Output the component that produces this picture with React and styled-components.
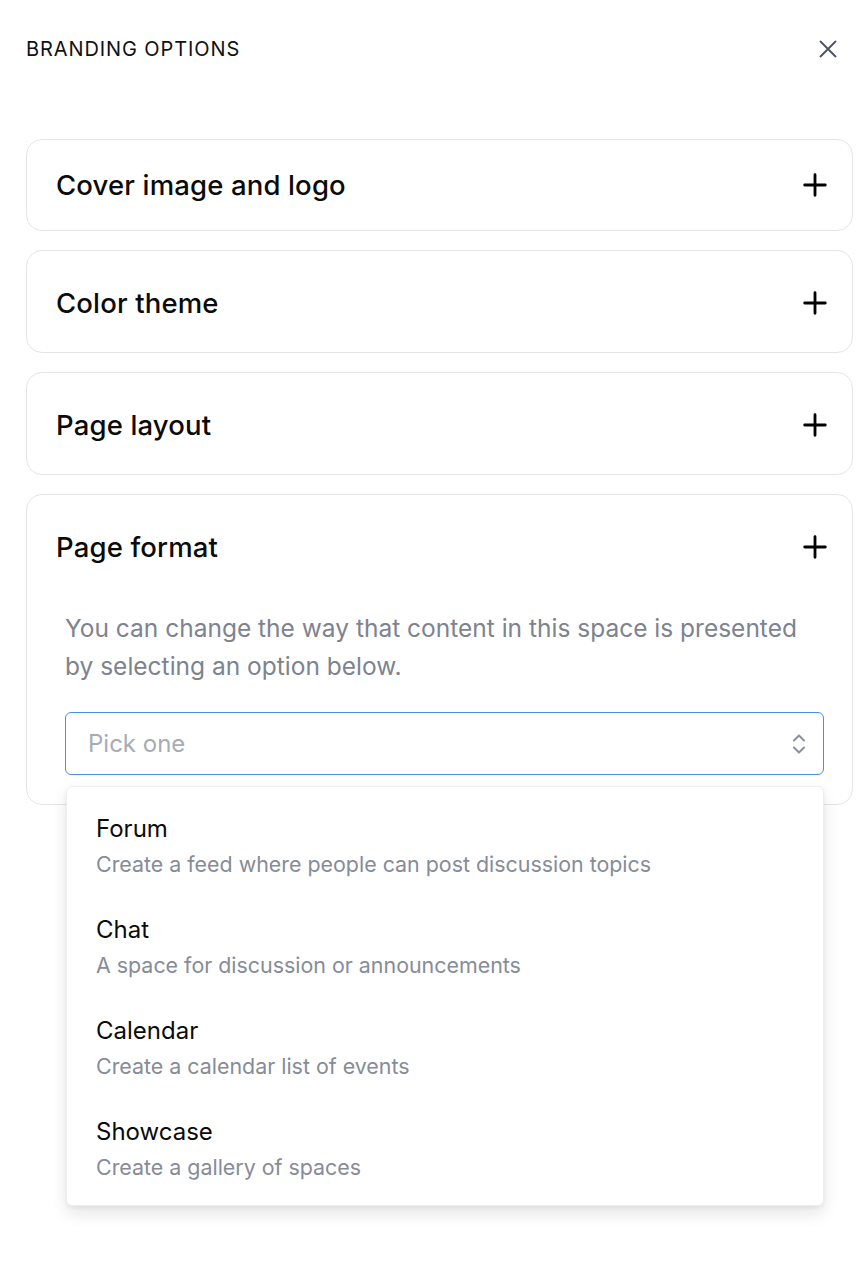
import React from "react";
import styled, { createGlobalStyle } from "styled-components";

const GlobalStyle = createGlobalStyle`
  html, body {
    margin: 0;
    padding: 0;
    background: #ffffff;
    font-family: Inter, "Noto Sans", "Liberation Sans", sans-serif;
    color: #000000;
  }
`;

const Page = styled.div`
  width: 864px;
  min-height: 1276px;
  box-sizing: border-box;
  padding: 32px 11px 0 26px;
`;

const Header = styled.div`
  display: flex;
  align-items: center;
  justify-content: space-between;
  height: 34px;
  padding-right: 15px;
  margin-bottom: 73px;
`;

const PanelTitle = styled.h1`
  margin: 0;
  font-size: 20px;
  font-weight: 400;
  letter-spacing: 0.9px;
  color: #111111;
`;

const CloseButton = styled.button`
  border: 0;
  background: none;
  padding: 0;
  display: flex;
  color: #4b5563;
  cursor: pointer;
`;

const CardList = styled.div`
  display: flex;
  flex-direction: column;
  gap: 19px;
`;

const Card = styled.section`
  border: 1px solid #e3e5e8;
  border-radius: 16px;
  background: #ffffff;
  padding: 0 24px 0 29px;
`;

const CardHeader = styled.div`
  display: flex;
  align-items: center;
  justify-content: space-between;
  height: ${(p) => (p.$compact ? "90px" : "101px")};
  padding-top: ${(p) => (p.$compact ? "0" : "3px")};
  box-sizing: border-box;
`;

const CardTitle = styled.h2`
  margin: 0;
  font-size: 27.5px;
  font-weight: 500;
  letter-spacing: 0.15px;
  color: #0b0b0b;
`;

const CardBody = styled.div`
  padding: 13px 4px 29px 9px;
`;

const Description = styled.p`
  margin: 0 0 27px;
  font-size: 24.5px;
  line-height: 38px;
  color: #7d838f;
`;

const SelectWrap = styled.div`
  position: relative;
`;

const SelectBox = styled.div`
  display: flex;
  align-items: center;
  justify-content: space-between;
  height: 63px;
  box-sizing: border-box;
  border: 1px solid #4a90e2;
  border-radius: 6px;
  padding: 0 16px 0 22px;
`;

const Placeholder = styled.span`
  font-size: 24px;
  color: #a6acb6;
`;

const Menu = styled.ul`
  position: absolute;
  top: 74px;
  left: 1px;
  right: 0;
  margin: 0;
  padding: 8px 0 6px;
  list-style: none;
  background: #ffffff;
  border: 1px solid #eceef1;
  border-radius: 6px;
  box-shadow: 0 8px 16px rgba(17, 24, 39, 0.1), 0 2px 4px rgba(17, 24, 39, 0.05);
  z-index: 2;
`;

const Option = styled.li`
  padding: 17.5px 29px 17.5px;
`;

const OptionTitle = styled.div`
  font-size: 24px;
  line-height: 32px;
  color: #0b0b0b;
`;

const OptionText = styled.div`
  margin-top: 4px;
  font-size: 21.4px;
  line-height: 30px;
  color: #868c97;
`;

const PlusIcon = () => (
  <svg width="26" height="26" viewBox="0 0 24 24" fill="none" stroke="#000" strokeWidth="2.6" strokeLinecap="round">
    <path d="M12 2.5v19M2.5 12h19" />
  </svg>
);

const CloseIcon = () => (
  <svg width="20" height="20" viewBox="0 0 20 20" fill="none" stroke="currentColor" strokeWidth="1.9" strokeLinecap="round">
    <path d="M2.5 2.5l15 15M17.5 2.5l-15 15" />
  </svg>
);

const ChevronsIcon = () => (
  <svg width="16" height="24" viewBox="0 0 16 24" fill="none" stroke="#8a909b" strokeWidth="2" strokeLinecap="round" strokeLinejoin="round">
    <path d="M3 8.5l5-5 5 5M3 15.5l5 5 5-5" />
  </svg>
);

const sections = [
  { title: "Cover image and logo", compact: true },
  { title: "Color theme" },
  { title: "Page layout" },
];

const options = [
  { title: "Forum", text: "Create a feed where people can post discussion topics" },
  { title: "Chat", text: "A space for discussion or announcements" },
  { title: "Calendar", text: "Create a calendar list of events" },
  { title: "Showcase", text: "Create a gallery of spaces" },
];

export default function App() {
  return (
    <>
      <GlobalStyle />
      <Page>
        <Header>
          <PanelTitle>BRANDING OPTIONS</PanelTitle>
          <CloseButton aria-label="Close">
            <CloseIcon />
          </CloseButton>
        </Header>
        <CardList>
          {sections.map((s) => (
            <Card key={s.title}>
              <CardHeader $compact={s.compact}>
                <CardTitle>{s.title}</CardTitle>
                <PlusIcon />
              </CardHeader>
            </Card>
          ))}
          <Card>
            <CardHeader>
              <CardTitle>Page format</CardTitle>
              <PlusIcon />
            </CardHeader>
            <CardBody>
              <Description>
                You can change the way that content in this space is presented by selecting an option below.
              </Description>
              <SelectWrap>
                <SelectBox>
                  <Placeholder>Pick one</Placeholder>
                  <ChevronsIcon />
                </SelectBox>
                <Menu>
                  {options.map((o) => (
                    <Option key={o.title}>
                      <OptionTitle>{o.title}</OptionTitle>
                      <OptionText>{o.text}</OptionText>
                    </Option>
                  ))}
                </Menu>
              </SelectWrap>
            </CardBody>
          </Card>
        </CardList>
      </Page>
    </>
  );
}
